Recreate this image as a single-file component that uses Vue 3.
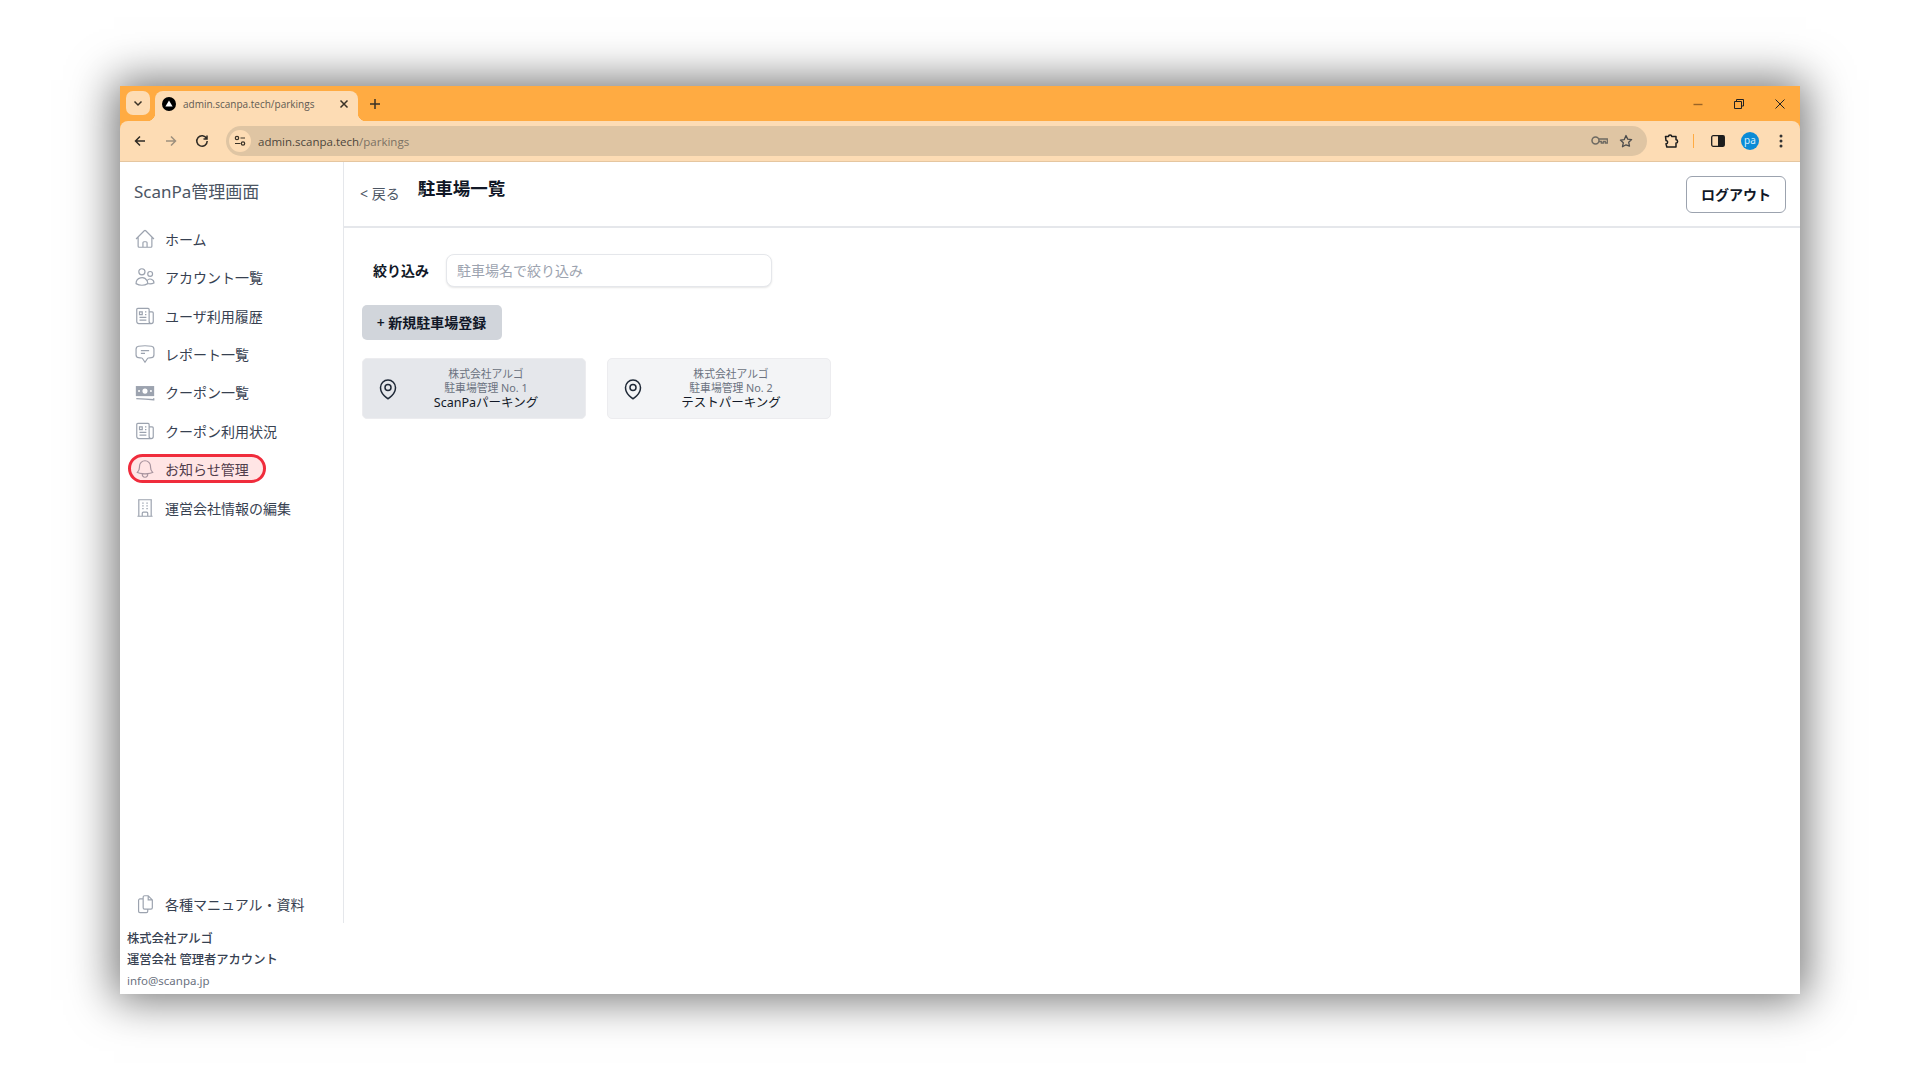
<script setup>
const navItems = [
  { label: "ホーム", icon: "M2.25 12l8.954-8.955c.44-.439 1.152-.439 1.591 0L21.75 12M4.5 9.75v10.125c0 .621.504 1.125 1.125 1.125H9.75v-4.875c0-.621.504-1.125 1.125-1.125h2.25c.621 0 1.125.504 1.125 1.125V21h4.125c.621 0 1.125-.504 1.125-1.125V9.75M8.25 21h8.25" },
  { label: "アカウント一覧", icon: "M15 19.128a9.38 9.38 0 002.625.372 9.337 9.337 0 004.121-.952 4.125 4.125 0 00-7.533-2.493M15 19.128v-.003c0-1.113-.285-2.16-.786-3.07M15 19.128v.106A12.318 12.318 0 018.624 21c-2.331 0-4.512-.645-6.374-1.766l-.001-.109a6.375 6.375 0 0111.964-3.07M12 6.375a3.375 3.375 0 11-6.75 0 3.375 3.375 0 016.75 0zm8.25 2.25a2.625 2.625 0 11-5.25 0 2.625 2.625 0 015.25 0z" },
  { label: "ユーザ利用履歴", icon: "M12 7.5h1.5m-1.5 3h1.5m-7.5 3h7.5m-7.5 3h7.5m3-9h3.375c.621 0 1.125.504 1.125 1.125V18a2.25 2.25 0 01-2.25 2.25M16.5 7.5V18a2.25 2.25 0 002.25 2.25M16.5 7.5V4.875c0-.621-.504-1.125-1.125-1.125H4.125C3.504 3.75 3 4.254 3 4.875V18a2.25 2.25 0 002.25 2.25h13.5M6 7.5h3v3H6v-3z" },
  { label: "レポート一覧", icon: "M7.5 8.25h9m-9 3H12m-9.75 1.51c0 1.6 1.123 2.994 2.707 3.227 1.129.166 2.27.293 3.423.379.35.026.67.21.865.501L12 21l2.755-4.133a1.14 1.14 0 01.865-.501 48.172 48.172 0 003.423-.379c1.584-.233 2.707-1.626 2.707-3.228V6.741c0-1.602-1.123-2.995-2.707-3.228A48.394 48.394 0 0012 3c-2.392 0-4.744.175-7.043.513C3.373 3.746 2.25 5.14 2.25 6.741v6.018z" },
  { label: "クーポン一覧", cash: true },
  { label: "クーポン利用状況", icon: "M12 7.5h1.5m-1.5 3h1.5m-7.5 3h7.5m-7.5 3h7.5m3-9h3.375c.621 0 1.125.504 1.125 1.125V18a2.25 2.25 0 01-2.25 2.25M16.5 7.5V18a2.25 2.25 0 002.25 2.25M16.5 7.5V4.875c0-.621-.504-1.125-1.125-1.125H4.125C3.504 3.75 3 4.254 3 4.875V18a2.25 2.25 0 002.25 2.25h13.5M6 7.5h3v3H6v-3z" },
  { label: "お知らせ管理", marked: true, icon: "M14.857 17.082a23.848 23.848 0 005.454-1.31A8.967 8.967 0 0118 9.75v-.7V9A6 6 0 006 9v.75a8.967 8.967 0 01-2.312 6.022c1.733.64 3.56 1.085 5.455 1.31m5.714 0a24.255 24.255 0 01-5.714 0m5.714 0a3 3 0 11-5.714 0" },
  { label: "運営会社情報の編集", icon: "M3.75 21h16.5M4.5 3h15M5.25 3v18m13.5-18v18M9 6.75h1.5m-1.5 3h1.5m-1.5 3h1.5m3-6H15m-1.5 3H15m-1.5 3H15M9 21v-3.375c0-.621.504-1.125 1.125-1.125h3.75c.621 0 1.125.504 1.125 1.125V21" },
];

const manualIcon = "M10 6.500H6.500A1.500 1.500 0 005 8v12a1.500 1.500 0 001.500 1.500h7A1.500 1.500 0 0015 20v-2.500M10 4.500a1.500 1.500 0 011.500-1.500h4l4.500 4.500V16a1.500 1.500 0 01-1.500 1.500h-7A1.500 1.500 0 0110 16V4.500zM15.500 3v4.500H20";

const parkings = [
  { no: 1, name: "ScanPaパーキング", active: true },
  { no: 2, name: "テストパーキング", active: false },
];
</script>

<template>
  <div class="page">
    <div class="window">
      <div class="load-bar"><span class="load-done"></span><span class="load-rest"></span></div>

      <div class="tabstrip">
        <div class="tab-search">
          <svg width="12" height="12" viewBox="0 0 12 12"><path d="M2.500 4.500L6 8l3.500-3.500" class="chrome-line" /></svg>
        </div>
        <div class="tab">
          <svg class="favicon" width="14" height="14" viewBox="0 0 14 14">
            <circle cx="7" cy="7" r="7" fill="#000" />
            <path d="M7 3.400l3.600 6.200H3.400z" fill="#fff" />
          </svg>
          <span class="tab-title">admin.scanpa.tech/parkings</span>
          <svg class="tab-close" width="10" height="10" viewBox="0 0 10 10"><path d="M1.500 1.500l7 7m0-7l-7 7" class="chrome-line" /></svg>
        </div>
        <svg class="tab-new" width="12" height="12" viewBox="0 0 12 12"><path d="M6 1v10M1 6h10" class="chrome-line" /></svg>
        <div class="win-controls">
          <svg width="12" height="12" viewBox="0 0 12 12"><path d="M1.500 6.500h9" stroke="#9a6426" stroke-width="1.400" /></svg>
          <svg width="12" height="12" viewBox="0 0 12 12"><path d="M3.500 3V1.500h7V8H9M1.500 3.500h7v7h-7z" fill="none" stroke="#222" stroke-width="1" /></svg>
          <svg width="12" height="12" viewBox="0 0 12 12"><path d="M1.500 1.500l9 9m0-9l-9 9" fill="none" stroke="#222" stroke-width="1" /></svg>
        </div>
      </div>

      <div class="toolbar">
        <div class="nav-buttons">
          <svg width="14" height="14" viewBox="0 0 14 14"><path d="M12 7H2.500M7 2.500L2.500 7 7 11.500" class="tool-line" /></svg>
          <svg width="14" height="14" viewBox="0 0 14 14"><path d="M2 7h9.500M7 2.500L11.500 7 7 11.500" class="tool-line faded" /></svg>
          <svg width="14" height="14" viewBox="0 0 14 14"><path d="M11.600 4.600A5.200 5.200 0 1012.200 7M12 1.500v3.500H8.500" class="tool-line" /></svg>
        </div>
        <div class="omnibox">
          <div class="site-info">
            <svg width="12" height="12" viewBox="0 0 12 12">
              <circle cx="3" cy="3" r="1.700" class="tool-thin" />
              <path d="M6.500 3H11M1 8.500h5.500" class="tool-thin" />
              <circle cx="9" cy="8.500" r="1.700" class="tool-thin" />
            </svg>
          </div>
          <span class="url">admin.scanpa.tech<span class="url-path">/parkings</span></span>
          <div class="omni-icons">
            <svg width="17" height="12" viewBox="0 0 17 12">
              <circle cx="4.500" cy="5.500" r="3.500" fill="none" stroke="#6e6a62" stroke-width="1.500" />
              <path d="M8 4h8.300v4h-2V6.500h-2V8h-2V6.500H8" fill="none" stroke="#6e6a62" stroke-width="1.300" />
            </svg>
            <svg width="14" height="14" viewBox="0 0 14 14"><path d="M7 1.500l1.700 3.600 3.900.5-2.900 2.700.8 3.900L7 10.800l-3.500 1.900.8-3.900-2.900-2.700 3.900-.5z" fill="none" stroke="#4c4c4c" stroke-width="1.300" stroke-linejoin="round" /></svg>
          </div>
        </div>
        <div class="tool-right">
          <svg width="16" height="16" viewBox="0 0 16 16"><path d="M2.500 3.500h3a1.600 1.600 0 013.200 0h4.300v3.300a1.600 1.600 0 010 3.200v4H3.800L3 10.800a1.600 1.600 0 000-3.200z" fill="none" stroke="#1d1d1d" stroke-width="1.500" stroke-linejoin="round" /></svg>
          <span class="tool-sep"></span>
          <svg width="14" height="12" viewBox="0 0 14 12">
            <rect x="0.700" y="0.700" width="12.600" height="10.600" rx="1.500" fill="none" stroke="#1d1d1d" stroke-width="1.300" />
            <rect x="7" y="0.700" width="6.300" height="10.600" fill="#1d1d1d" />
          </svg>
          <span class="avatar">pa</span>
          <svg width="4" height="14" viewBox="0 0 4 14">
            <circle cx="2" cy="2" r="1.500" fill="#333" />
            <circle cx="2" cy="7" r="1.500" fill="#333" />
            <circle cx="2" cy="12" r="1.500" fill="#333" />
          </svg>
        </div>
      </div>

      <div class="app">
        <aside class="side-col">
          <div class="sidebar">
            <div class="brand">ScanPa管理画面</div>
            <nav class="nav">
              <a v-for="item in navItems" :key="item.label" class="nav-item" :class="{ marked: item.marked }">
                <svg v-if="item.cash" class="nav-icon" viewBox="0 0 24 24">
                  <path d="M2 5.500h20v11H2z" fill="#9ca3af" />
                  <circle cx="12" cy="11" r="2.800" fill="#fff" />
                  <circle cx="5.500" cy="11" r="1.100" fill="#fff" />
                  <circle cx="18.500" cy="11" r="1.100" fill="#fff" />
                  <path d="M2.500 19.200c6 .2 12 .5 19 1.300v-1.800" fill="none" stroke="#9ca3af" stroke-width="1.500" />
                </svg>
                <svg v-else class="nav-icon" viewBox="0 0 24 24">
                  <path :d="item.icon" class="nav-stroke" />
                </svg>
                <span>{{ item.label }}</span>
              </a>
            </nav>
            <a class="nav-item manual">
              <svg class="nav-icon" viewBox="0 0 24 24"><path :d="manualIcon" class="nav-stroke" /></svg>
              <span>各種マニュアル・資料</span>
            </a>
          </div>
          <div class="account">
            <div class="account-line">株式会社アルゴ</div>
            <div class="account-line">運営会社 管理者アカウント</div>
            <div class="account-mail">info@scanpa.jp</div>
          </div>
        </aside>

        <main class="main">
          <header class="header">
            <a class="back">&lt; 戻る</a>
            <h1 class="title">駐車場一覧</h1>
            <button class="logout">ログアウト</button>
          </header>
          <section class="content">
            <div class="filter">
              <label class="filter-label">絞り込み</label>
              <input class="filter-input" placeholder="駐車場名で絞り込み" />
            </div>
            <button class="add-button">+ 新規駐車場登録</button>
            <div class="cards">
              <div v-for="p in parkings" :key="p.no" class="card" :class="{ active: p.active }">
                <svg class="pin" viewBox="0 0 24 24">
                  <path d="M15 10.500a3 3 0 11-6 0 3 3 0 016 0z" class="pin-line" />
                  <path d="M19.500 10.500c0 7.142-7.500 11.250-7.500 11.250S4.500 17.642 4.500 10.500a7.500 7.500 0 1115 0z" class="pin-line" />
                </svg>
                <div class="card-text">
                  <div class="card-sub">株式会社アルゴ</div>
                  <div class="card-sub">駐車場管理 No. {{ p.no }}</div>
                  <div class="card-name">{{ p.name }}</div>
                </div>
              </div>
            </div>
          </section>
        </main>
      </div>
    </div>
  </div>
</template>

<style>
body {
  background: #fff;
}
</style>

<style scoped>
.page {
  width: 1920px;
  height: 1080px;
  padding: 86px 0 0 120px;
  box-sizing: border-box;
  overflow: hidden;
  font-family: "Noto Sans", "Noto Sans CJK JP", sans-serif;
  color: #374151;
}

.window {
  position: relative;
  width: 1680px;
  height: 908px;
  display: flex;
  flex-direction: column;
  background: #fff;
  box-shadow: 0 0 42px 6px rgba(0, 0, 0, 0.55);
}

.load-bar {
  position: absolute;
  top: 0;
  left: 735px;
  display: flex;
  height: 1px;
}
.load-done {
  width: 42px;
  background: #1479c9;
}
.load-rest {
  width: 169px;
  background: #d8d8d8;
}

/* browser chrome */
.tabstrip {
  height: 35px;
  display: flex;
  align-items: flex-end;
  background: #ffab42;
  position: relative;
}
.tab-search {
  width: 24px;
  height: 24px;
  margin: 0 5px 6px 6px;
  border-radius: 7px;
  background: #fddcb4;
  display: flex;
  align-items: center;
  justify-content: center;
}
.tab {
  position: relative;
  width: 203px;
  height: 30px;
  box-sizing: border-box;
  padding: 0 9px 4px 7px;
  display: flex;
  align-items: center;
  background: #fddcb4;
  border-radius: 8px 8px 0 0;
}
.tab::before,
.tab::after {
  content: "";
  position: absolute;
  bottom: 0;
  width: 8px;
  height: 8px;
}
.tab::before {
  left: -8px;
  background: radial-gradient(circle at 0 0, transparent 8px, #fddcb4 8.500px);
}
.tab::after {
  right: -8px;
  background: radial-gradient(circle at 100% 0, transparent 8px, #fddcb4 8.500px);
}
.tab-title {
  flex: 1;
  margin-left: 7px;
  font-family: "Open Sans", sans-serif;
  font-size: 10px;
  color: #5f5a52;
  white-space: nowrap;
}
.tab-new {
  margin: 0 0 11px 11px;
}
.chrome-line {
  fill: none;
  stroke: #3a3226;
  stroke-width: 1.500;
}
.win-controls {
  margin-left: auto;
  align-self: center;
  display: flex;
  gap: 29px;
  padding-right: 14px;
}

.toolbar {
  height: 41px;
  box-sizing: border-box;
  display: flex;
  align-items: center;
  background: #fddcb4;
  border-bottom: 1px solid #e5c6a0;
  border-radius: 8px 8px 0 0;
  box-shadow: 0 -8px 0 #ffab42;
}
.nav-buttons {
  display: flex;
  gap: 17px;
  margin-left: 13px;
}
.tool-line {
  fill: none;
  stroke: #2e2a24;
  stroke-width: 1.500;
}
.tool-line.faded {
  stroke: #9d907e;
}
.tool-thin {
  fill: none;
  stroke: #3a3226;
  stroke-width: 1.200;
}
.omnibox {
  width: 1421px;
  height: 30px;
  margin-left: 17px;
  padding: 0 14px 0 3px;
  box-sizing: border-box;
  display: flex;
  align-items: center;
  border-radius: 15px;
  background: #dfc5a3;
}
.site-info {
  width: 22px;
  height: 22px;
  border-radius: 50%;
  background: #fddcb4;
  display: flex;
  align-items: center;
  justify-content: center;
}
.url {
  margin-left: 7px;
  font-family: "Open Sans", sans-serif;
  font-size: 11.500px;
  color: #4d463c;
}
.url-path {
  color: #7b7163;
}
.omni-icons {
  margin-left: auto;
  display: flex;
  align-items: center;
  gap: 11px;
}
.tool-right {
  display: flex;
  align-items: center;
  margin-left: 16px;
}
.tool-sep {
  width: 1px;
  height: 14px;
  margin: 0 17px 0 14px;
  background: #ffab42;
}
.avatar {
  width: 18px;
  height: 18px;
  margin: 0 20px 0 16px;
  border-radius: 50%;
  background: #0b8bd6;
  color: #d5eefc;
  font-size: 10px;
  line-height: 17px;
  text-align: center;
}

/* app */
.app {
  flex: 1;
  display: flex;
  min-height: 0;
}
.side-col {
  width: 224px;
  display: flex;
  flex-direction: column;
  flex-shrink: 0;
}
.sidebar {
  flex: 1;
  display: flex;
  flex-direction: column;
  border-right: 1px solid #e5e7eb;
}
.brand {
  height: 57.600px;
  padding: 1px 0 0 14px;
  box-sizing: border-box;
  font-size: 17px;
  line-height: 58px;
  color: #4b5563;
}
.nav {
  flex: 1;
  display: flex;
  flex-direction: column;
}
.nav-item {
  position: relative;
  height: 38.400px;
  display: flex;
  align-items: center;
  padding-left: 14px;
  font-size: 14px;
  color: #374151;
}
.nav-item span {
  margin-left: 9px;
}
.nav-item.marked::after {
  content: "";
  position: absolute;
  left: 8px;
  top: 4px;
  width: 138px;
  height: 29px;
  box-sizing: border-box;
  border: 3.500px solid #f02c3c;
  border-radius: 15px;
  background: rgba(255, 40, 40, 0.12);
}
.nav-icon {
  width: 22px;
  height: 22px;
  flex-shrink: 0;
}
.nav-stroke {
  fill: none;
  stroke: #9ca3af;
  stroke-width: 1.300;
}
.account {
  height: 71px;
  padding: 5px 0 0 7px;
  box-sizing: border-box;
}
.account-line {
  font-size: 12.300px;
  line-height: 21px;
  font-weight: 500;
  color: #374151;
}
.account-mail {
  font-size: 11.500px;
  line-height: 21px;
  color: #6b7280;
}

.main {
  flex: 1;
  display: flex;
  flex-direction: column;
}
.header {
  height: 66px;
  box-sizing: border-box;
  border-bottom: 2px solid #e5e7eb;
  display: flex;
  align-items: flex-start;
  padding: 14px 14px 0 16px;
}
.back {
  margin-top: 7px;
  font-size: 14px;
  color: #4b5563;
}
.title {
  margin: -1px 0 0 18px;
  font-size: 17.500px;
  line-height: 26px;
  font-weight: 600;
  color: #111827;
}
.logout {
  margin-left: auto;
  width: 100px;
  height: 37px;
  padding: 0 0 2px;
  border: 1px solid #9ca3af;
  border-radius: 6px;
  background: #fff;
  font-family: inherit;
  font-size: 14px;
  font-weight: 600;
  color: #111827;
}
.content {
  padding: 26px 0 0 18px;
}
.filter {
  display: flex;
  align-items: center;
  padding-left: 11px;
}
.filter-label {
  width: 73px;
  padding-bottom: 2px;
  font-size: 14px;
  font-weight: 600;
  color: #111827;
}
.filter-input {
  width: 326px;
  height: 33px;
  box-sizing: border-box;
  padding: 0 11px 1px 10px;
  border: 1px solid #e5e7eb;
  border-radius: 8px;
  box-shadow: 0 1px 2px rgba(0, 0, 0, 0.1);
  font-family: inherit;
  font-size: 14px;
  outline: none;
}
.filter-input::placeholder {
  color: #9ca3af;
}
.add-button {
  display: block;
  width: 140px;
  height: 35px;
  margin-top: 18px;
  padding: 0 1px 1px 0;
  border: none;
  border-radius: 5px;
  background: #d1d5db;
  font-family: inherit;
  font-size: 14px;
  font-weight: 600;
  color: #111827;
}
.cards {
  display: flex;
  gap: 21px;
  margin-top: 18px;
}
.card {
  width: 224px;
  height: 61px;
  box-sizing: border-box;
  padding: 0 13px;
  display: flex;
  align-items: center;
  border: 1px solid #ececef;
  border-radius: 5px;
  background: #f3f4f6;
}
.card.active {
  background: #e5e7eb;
}
.pin {
  width: 24px;
  height: 24px;
  flex-shrink: 0;
}
.pin-line {
  fill: none;
  stroke: #1f2937;
  stroke-width: 1.500;
}
.card-text {
  flex: 1;
  text-align: center;
}
.card-sub {
  font-size: 10.800px;
  line-height: 14px;
  color: #6b7280;
}
.card-name {
  font-size: 12.500px;
  line-height: 15px;
  color: #111827;
}
</style>
